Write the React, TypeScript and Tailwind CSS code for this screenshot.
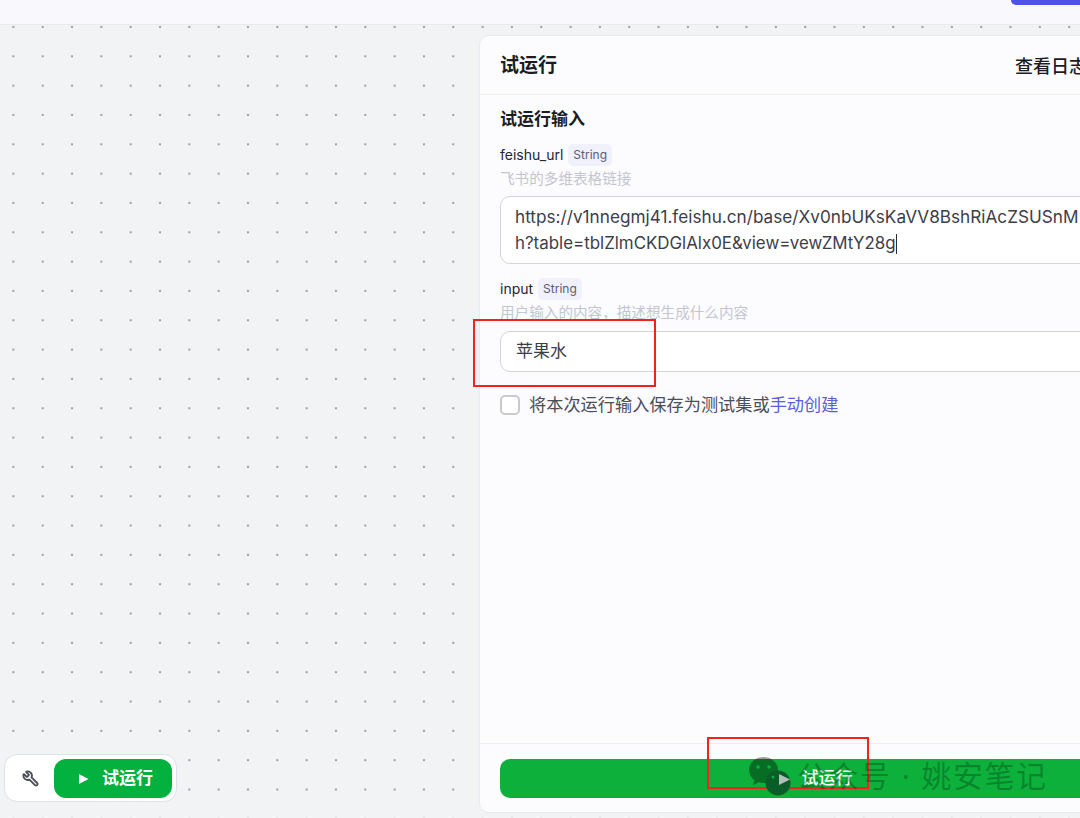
import { Wrench } from "lucide-react";

const font = "font-['Inter','Noto_Sans_CJK_SC',sans-serif]";

function TypeTag({ children }: { children: string }) {
  return (
    <span className="flex h-[22px] items-center rounded-[5px] bg-[#f0f1fa] px-[5px] text-xs text-[#5a5d70]">
      {children}
    </span>
  );
}

function FieldLabel({ name, hint }: { name: string; hint: string }) {
  return (
    <div>
      <div className="flex h-[24px] items-center gap-[5px] text-sm text-[#23252f]">
        <span>{name}</span>
        <TypeTag>String</TypeTag>
      </div>
      <div className="mt-px h-[22px] text-[14.6px] leading-[22px] text-[#c4c6cf]">{hint}</div>
    </div>
  );
}

function WeChatMark() {
  return (
    <svg width="44" height="40" viewBox="0 0 44 40">
      <path d="M14.500 1C6.500 1 0 6.700 0 14c0 4.200 2.200 7.800 5.500 10.200L4 29l5.800-2.800c1.500.4 3.100.7 4.700.7 8 0 14.500-5.700 14.500-12.900S22.500 1 14.500 1z" fill="#000" fillOpacity="0.38" />
      <circle cx="9" cy="11" r="1.800" fill="#0cb03b" />
      <circle cx="20" cy="11" r="1.800" fill="#0cb03b" />
      <circle cx="29" cy="27" r="12.500" fill="#0a5c28" />
      <circle cx="24" cy="21" r="1.500" fill="#0cb03b" />
      <path d="M30 18l11 5.500-11 5.500z" fill="#b9bdb9" />
    </svg>
  );
}

export default function App() {
  return (
    <div className={`relative flex h-[818px] w-[1080px] flex-col overflow-hidden bg-[#f2f3f5] ${font}`}>
      <header className="flex h-[25px] shrink-0 justify-end border-b border-[#e8ebf0] bg-[#f9f9fd]">
        <div className="h-[5px] w-[69px] rounded-bl-[8px] bg-[#4d53e8]" />
      </header>

      <main className="flex min-h-0 flex-1 bg-[radial-gradient(circle,#9a9da3_1px,transparent_1.4px)] bg-[size:29.33px_29.33px] bg-[position:-1.3px_-12.7px] pb-[5px] pl-[479px] pt-[10px]">
        <section className="flex w-[640px] shrink-0 flex-col rounded-tl-[10px] rounded-bl-[10px] border border-[#eaebf2] bg-[#fcfcff]">
          <div className="flex h-[59px] shrink-0 items-center justify-between border-b border-[#eceef5] pl-[20px] pr-[31px] pt-[3px]">
            <h1 className="text-[19px] font-semibold text-[#1c1d23]">试运行</h1>
            <span className="text-lg font-medium text-[#1c1d23]">查看日志</span>
          </div>

          <div className="flex-1 px-[20px] pt-[12px]">
            <h2 className="text-[17px] font-semibold leading-[24px] text-[#1c1d23]">试运行输入</h2>
            <div className="mt-[12px]">
              <FieldLabel name="feishu_url" hint="飞书的多维表格链接" />
            </div>
            <div className="mt-[6px] h-[68px] w-[620px] rounded-[10px] border border-[#d0d3e2] bg-white px-[14px] py-[6px] text-[17.2px] leading-[27px] text-[#3c3e49]">
              <div className="whitespace-nowrap">https://v1nnegmj41.feishu.cn/base/Xv0nbUKsKaVV8BshRiAcZSUSnM</div>
              <div className="flex items-center whitespace-nowrap text-[16.9px]">
                h?table=tblZlmCKDGlAlx0E&amp;view=vewZMtY28g
                <span className="h-[20px] w-px bg-[#2a2b33]" />
              </div>
            </div>

            <div className="mt-[13px]">
              <FieldLabel name="input" hint="用户输入的内容，描述想生成什么内容" />
            </div>
            <div className="mt-[7px] flex h-[41px] w-[620px] items-center rounded-[10px] border border-[#d0d3e2] bg-white px-[15px] text-[17px] text-[#3c3e49]">
              苹果水
            </div>

            <label className="mt-[20px] flex items-center gap-[9px] text-[17.2px] text-[#4b4d58]">
              <span className="h-[20px] w-[20px] rounded-[5px] border-2 border-[#c9cad0] bg-white" />
              <span>
                将本次运行输入保存为测试集或<span className="text-[#5a5fe0]">手动创建</span>
              </span>
            </label>
          </div>

          <div className="shrink-0 border-t border-[#eceef5] pb-[14px] pl-[20px] pt-[15px]">
            <button className="flex h-[39px] w-[654px] items-center justify-center rounded-[10px] bg-[#0cb03b] text-[17px] font-medium text-white">
              试运行
            </button>
          </div>
        </section>
      </main>

      <div className="absolute left-[4px] top-[754px] flex h-[48px] w-[173px] items-center rounded-[13px] border border-[#dfe1ea] bg-white pl-[49px]">
        <Wrench className="absolute left-[17px] top-[15px] h-[17px] w-[17px] -scale-x-100 text-[#4a4c56]" strokeWidth={2.6} />
        <button className="flex h-[39px] w-[118px] items-center rounded-[12px] bg-[#03b13f] pl-[24px] pt-px text-[17px] font-semibold text-white">
          <svg width="11" height="12" viewBox="0 0 11 12" className="mr-[13px]">
            <path d="M1 1l9.500 5-9.500 5z" fill="#fff" />
          </svg>
          试运行
        </button>
      </div>

      <div className="absolute left-[473px] top-[319px] h-[68px] w-[183px] border-2 border-[#f2231b]" />
      <div className="absolute left-[707px] top-[737px] h-[52px] w-[162px] border-2 border-[#f2231b]" />

      <div className="absolute left-[749px] top-[756px] flex items-center gap-[4px]">
        <WeChatMark />
        <span className="text-[30px] leading-[40px] tracking-[1.500px] text-black/25">公众号 · 姚安笔记</span>
      </div>
    </div>
  );
}
